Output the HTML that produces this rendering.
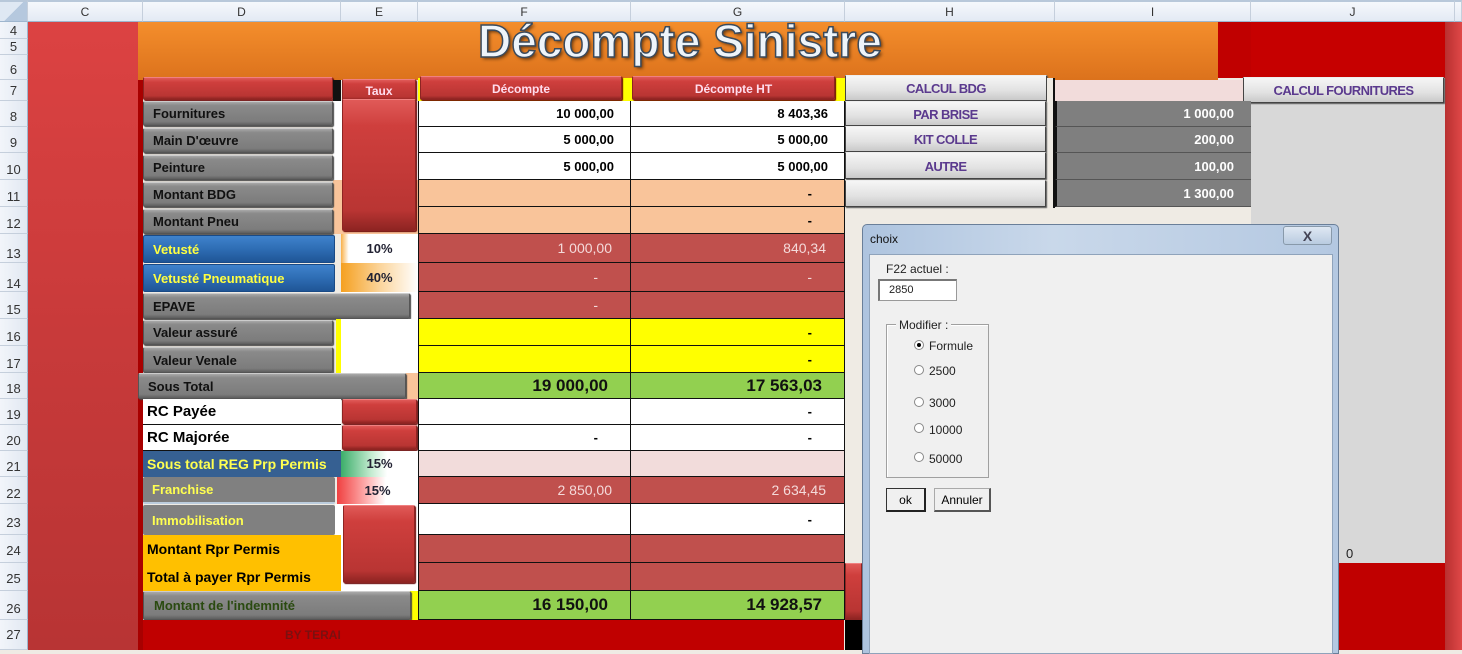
<!DOCTYPE html>
<html><head><meta charset="utf-8"><style>
*{margin:0;padding:0;box-sizing:border-box}
body{width:1462px;height:650px;overflow:hidden;background:#efebe4;font-family:"Liberation Sans",sans-serif;position:relative}
div{position:absolute}
.ch{top:0;height:22px;background:linear-gradient(#f5f8fc,#e3eaf4);border-right:1px solid #c5cfdc;border-bottom:1px solid #9eb6ce;border-top:2px solid #b8c8da;font-size:12px;color:#333;text-align:center;line-height:20px}
.rh{left:0;width:28px;background:linear-gradient(90deg,#f2f5fa,#e1e8f2);border-bottom:1px solid #c5cfdc;border-right:1px solid #9eb6ce;font-size:13px;color:#333;text-align:center}
.gb{background:linear-gradient(#a9a9a9,#8a8a8a 15%,#7c7c7c 85%,#5e5e5e);border:1px solid #555;border-top-color:#ccc;border-radius:2px;font-weight:bold;font-size:13px;color:#111;padding-left:9px;display:flex;align-items:center;box-shadow:1px 1px 1px #444}
.rb{background:linear-gradient(#e05a58,#cf3f3d 20%,#b93533 85%,#8e2422);border:1px solid #8e2422;border-top-color:#f08080;border-radius:2px;color:#fde;font-weight:bold;font-size:12px;text-align:center;box-shadow:1px 1px 1px #600}
.bb{background:linear-gradient(#3f82cc,#2e6db4 50%,#1f5596);border:1px solid #1a4a85;border-radius:2px;color:#ffff40;font-weight:bold;font-size:13px;padding-left:9px;display:flex;align-items:center}
.c{border-right:1px solid #111;border-bottom:1px solid #111;font-size:13px;text-align:right;padding-right:16px;display:flex;align-items:center;justify-content:flex-end}
.w{background:#fff;font-weight:bold;color:#000}
.p{background:#f9c49a;font-weight:bold}
.r{background:#c0504d;color:#f4dada;font-size:14px}
.y{background:#ffff00;font-weight:bold}
.g{background:#92d050;font-weight:bold;font-size:17px;color:#111}
.pk{background:#f2dcdb}
.hb{background:linear-gradient(#f6f6f6,#e2e2e2 60%,#c9c9c9);border:1px solid #444;border-top-color:#eee;color:#5b3a8e;font-weight:bold;font-size:13px;text-align:center;letter-spacing:-.6px;box-shadow:1px 1px 1px #555}
.iv{background:#7f7f7f;color:#fff;font-weight:bold;font-size:13px;text-align:right;padding-right:17px;border-bottom:1px solid #555;border-left:2px solid #111}
.dl{font-weight:bold;font-size:15px;color:#000;padding-left:4px;display:flex;align-items:center}
.rad{width:10px;height:10px;border-radius:50%;border:1px solid #888;background:#fff}
.rl{font-size:12px;color:#222}
</style></head><body>
<!-- column headers -->
<div class="ch" style="left:0;width:28px;background:linear-gradient(135deg,#dfe8f3 50%,#b5c8de 50%)"></div>
<div class="ch" style="left:28px;width:115px">C</div>
<div class="ch" style="left:143px;width:198px">D</div>
<div class="ch" style="left:341px;width:77px">E</div>
<div class="ch" style="left:418px;width:213px">F</div>
<div class="ch" style="left:631px;width:214px">G</div>
<div class="ch" style="left:845px;width:210px">H</div>
<div class="ch" style="left:1055px;width:196px">I</div>
<div class="ch" style="left:1251px;width:204px">J</div>
<div class="ch" style="left:1455px;width:7px"></div>
<!-- row headers -->
<div class="rh" style="top:22px;height:17px;line-height:17px">4</div>
<div class="rh" style="top:39px;height:16px;line-height:16px">5</div>
<div class="rh" style="top:55px;height:25px;line-height:30px">6</div>
<div class="rh" style="top:80px;height:21px;line-height:21px">7</div>
<div class="rh" style="top:101px;height:26px;line-height:32px">8</div>
<div class="rh" style="top:127px;height:26px;line-height:32px">9</div>
<div class="rh" style="top:153px;height:27px;line-height:34px">10</div>
<div class="rh" style="top:180px;height:27px;line-height:34px">11</div>
<div class="rh" style="top:207px;height:27px;line-height:34px">12</div>
<div class="rh" style="top:234px;height:29px;line-height:40px">13</div>
<div class="rh" style="top:263px;height:29px;line-height:42px">14</div>
<div class="rh" style="top:292px;height:27px;line-height:36px">15</div>
<div class="rh" style="top:319px;height:27px;line-height:36px">16</div>
<div class="rh" style="top:346px;height:27px;line-height:36px">17</div>
<div class="rh" style="top:373px;height:26px;line-height:32px">18</div>
<div class="rh" style="top:399px;height:26px;line-height:32px">19</div>
<div class="rh" style="top:425px;height:26px;line-height:32px">20</div>
<div class="rh" style="top:451px;height:26px;line-height:32px">21</div>
<div class="rh" style="top:477px;height:27px;line-height:34px">22</div>
<div class="rh" style="top:504px;height:31px;line-height:38px">23</div>
<div class="rh" style="top:535px;height:28px;line-height:32px">24</div>
<div class="rh" style="top:563px;height:28px;line-height:32px">25</div>
<div class="rh" style="top:591px;height:29px;line-height:36px">26</div>
<div class="rh" style="top:620px;height:30px;line-height:30px">27</div>
<!-- C column & edges -->
<div style="left:28px;top:22px;width:110px;height:628px;background:linear-gradient(#dc4242,#c83a3a 50%,#b83434)"></div>
<div style="left:138px;top:80px;width:5px;height:570px;background:#a80000"></div>
<div style="left:1445px;top:22px;width:17px;height:628px;background:linear-gradient(90deg,#b83030,#e04848)"></div>
<!-- title -->
<div style="left:138px;top:22px;width:1080px;height:58px;background:linear-gradient(#f48e2c,#dc721c)"></div>
<div style="left:1218px;top:22px;width:33px;height:56px;background:#c00000"></div>
<div style="left:1251px;top:22px;width:194px;height:56px;background:#c60000"></div>
<div style="left:400px;top:14px;width:560px;text-align:center;font-size:46px;font-weight:bold;color:#eef4fa;-webkit-text-stroke:1.5px #3a4a5c;text-shadow:2px 2px 3px #6a3a10;letter-spacing:0">Décompte Sinistre</div>
<!-- row 7 -->
<div class="rb" style="left:143px;top:77px;width:190px;height:23px"></div>
<div style="left:333px;top:80px;width:8px;height:21px;background:#111"></div>
<div class="rb" style="left:342px;top:79px;width:74px;height:22px;line-height:22px">Taux</div>
<div style="left:418px;top:78px;width:427px;height:23px;background:#ffff00"></div>
<div class="rb" style="left:420px;top:76px;width:202px;height:24px;line-height:24px">Décompte</div>
<div class="rb" style="left:632px;top:76px;width:203px;height:24px;line-height:24px">Décompte HT</div>
<div class="hb" style="left:845px;top:75px;width:202px;height:26px;line-height:26px">CALCUL BDG</div>
<div style="left:1047px;top:78px;width:8px;height:130px;background:#efebe4;border-right:2px solid #111"></div>
<div class="pk" style="left:1055px;top:80px;width:190px;height:21px"></div>
<div style="left:1251px;top:101px;width:194px;height:462px;background:#d8d8d8"></div>
<div class="hb" style="left:1243px;top:77px;width:201px;height:26px;line-height:26px">CALCUL FOURNITURES</div>
<!-- E columns backgrounds -->
<div style="left:333px;top:101px;width:85px;height:133px;background:#fff"></div>
<div style="left:333px;top:180px;width:85px;height:54px;background:#f9c49a"></div>
<div class="rb" style="left:342px;top:99px;width:74px;height:132px"></div>
<!-- rows 8-12 -->
<div class="gb" style="left:143px;top:101px;width:190px;height:25px">Fournitures</div>
<div class="gb" style="left:143px;top:128px;width:190px;height:25px">Main D'œuvre</div>
<div class="gb" style="left:143px;top:155px;width:190px;height:25px">Peinture</div>
<div class="gb" style="left:143px;top:182px;width:190px;height:25px">Montant BDG</div>
<div class="gb" style="left:143px;top:209px;width:190px;height:25px">Montant Pneu</div>
<div class="c w" style="left:418px;top:101px;width:213px;height:26px;border-left:1px solid #111">10 000,00</div>
<div class="c w" style="left:631px;top:101px;width:214px;height:26px">8 403,36</div>
<div class="c w" style="left:418px;top:127px;width:213px;height:26px;border-left:1px solid #111">5 000,00</div>
<div class="c w" style="left:631px;top:127px;width:214px;height:26px">5 000,00</div>
<div class="c w" style="left:418px;top:153px;width:213px;height:27px;border-left:1px solid #111">5 000,00</div>
<div class="c w" style="left:631px;top:153px;width:214px;height:27px">5 000,00</div>
<div class="c p" style="left:418px;top:180px;width:213px;height:27px;border-left:1px solid #111"></div>
<div class="c p" style="left:631px;top:180px;width:214px;height:27px;padding-right:32px">-</div>
<div class="c p" style="left:418px;top:207px;width:213px;height:27px;border-left:1px solid #111"></div>
<div class="c p" style="left:631px;top:207px;width:214px;height:27px;padding-right:32px">-</div>
<!-- H/I rows 8-11 -->
<div class="hb" style="left:845px;top:101px;width:201px;height:25px;line-height:25px">PAR BRISE</div>
<div class="hb" style="left:845px;top:126px;width:201px;height:26px;line-height:26px">KIT COLLE</div>
<div class="hb" style="left:845px;top:152px;width:201px;height:27px;line-height:27px">AUTRE</div>
<div class="hb" style="left:845px;top:180px;width:201px;height:27px"></div>
<div class="iv" style="left:1055px;top:101px;width:196px;height:26px;line-height:26px">1 000,00</div>
<div class="iv" style="left:1055px;top:127px;width:196px;height:26px;line-height:26px">200,00</div>
<div class="iv" style="left:1055px;top:153px;width:196px;height:27px;line-height:27px">100,00</div>
<div class="iv" style="left:1055px;top:180px;width:196px;height:27px;line-height:27px">1 300,00</div>
<!-- rows 13-15 -->
<div class="bb" style="left:143px;top:235px;width:192px;height:28px">Vetusté</div>
<div class="bb" style="left:143px;top:264px;width:192px;height:28px">Vetusté Pneumatique</div>
<div style="left:341px;top:234px;width:77px;height:29px;background:linear-gradient(90deg,#f9b048,#fff 10%);font-weight:bold;font-size:13px;color:#223;text-align:center;line-height:29px">10%</div>
<div style="left:341px;top:263px;width:77px;height:29px;background:linear-gradient(90deg,#f5a020,#fbd49a 50%,#fff);font-weight:bold;font-size:13px;color:#223;text-align:center;line-height:29px">40%</div>
<div style="left:341px;top:292px;width:77px;height:27px;background:#fff"></div>
<div class="c r" style="left:418px;top:234px;width:213px;height:29px;border-left:1px solid #111;padding-right:18px">1 000,00</div>
<div class="c r" style="left:631px;top:234px;width:214px;height:29px;padding-right:18px">840,34</div>
<div class="c r" style="left:418px;top:263px;width:213px;height:29px;border-left:1px solid #111;padding-right:32px">-</div>
<div class="c r" style="left:631px;top:263px;width:214px;height:29px;padding-right:32px">-</div>
<div class="c r" style="left:418px;top:292px;width:213px;height:27px;border-left:1px solid #111;padding-right:32px">-</div>
<div class="c r" style="left:631px;top:292px;width:214px;height:27px"></div>
<div class="gb" style="left:143px;top:293px;width:267px;height:26px">EPAVE</div>
<!-- rows 16-18 -->
<div style="left:336px;top:319px;width:5px;height:54px;background:#ffff00"></div>
<div style="left:341px;top:319px;width:77px;height:54px;background:#fff"></div>
<div class="gb" style="left:143px;top:320px;width:190px;height:25px">Valeur assuré</div>
<div class="gb" style="left:143px;top:347px;width:190px;height:26px">Valeur Venale</div>
<div class="c y" style="left:418px;top:319px;width:213px;height:27px;border-left:1px solid #111"></div>
<div class="c y" style="left:631px;top:319px;width:214px;height:27px;padding-right:32px">-</div>
<div class="c y" style="left:418px;top:346px;width:213px;height:27px;border-left:1px solid #111"></div>
<div class="c y" style="left:631px;top:346px;width:214px;height:27px;padding-right:32px">-</div>
<div style="left:406px;top:373px;width:12px;height:26px;background:#f9c49a"></div>
<div class="gb" style="left:138px;top:373px;width:268px;height:26px;padding-left:9px">Sous Total</div>
<div class="c g" style="left:418px;top:373px;width:213px;height:26px;border-left:1px solid #111;padding-right:22px">19 000,00</div>
<div class="c g" style="left:631px;top:373px;width:214px;height:26px;padding-right:22px">17 563,03</div>
<!-- rows 19-20 -->
<div class="dl" style="left:143px;top:399px;width:198px;height:26px;background:#fff;border-bottom:1px solid #111">RC Payée</div>
<div class="dl" style="left:143px;top:425px;width:198px;height:26px;background:#fff;border-bottom:1px solid #111">RC Majorée</div>
<div class="rb" style="left:342px;top:399px;width:75px;height:25px"></div>
<div class="rb" style="left:342px;top:425px;width:75px;height:25px"></div>
<div class="c w" style="left:418px;top:399px;width:213px;height:26px;border-left:1px solid #111"></div>
<div class="c w" style="left:631px;top:399px;width:214px;height:26px;padding-right:32px">-</div>
<div class="c w" style="left:418px;top:425px;width:213px;height:26px;border-left:1px solid #111;padding-right:32px">-</div>
<div class="c w" style="left:631px;top:425px;width:214px;height:26px;padding-right:32px">-</div>
<!-- row 21-22 -->
<div class="dl" style="left:143px;top:451px;width:198px;height:26px;background:#366092;color:#ffff50;font-size:14px">Sous total REG Prp Permis</div>
<div style="left:341px;top:451px;width:77px;height:26px;background:linear-gradient(90deg,#3cae6a,#c6ecd2 40%,#fff 60%);font-weight:bold;font-size:13px;color:#223;text-align:center;line-height:26px">15%</div>
<div class="c pk" style="left:418px;top:451px;width:213px;height:26px;border-left:1px solid #111"></div>
<div class="c pk" style="left:631px;top:451px;width:214px;height:26px"></div>
<div class="gb" style="left:143px;top:477px;width:192px;height:27px;color:#ffff50;padding-left:9px;border:none;box-shadow:none;background:#808080;border-bottom:2px solid #bcd">Franchise</div>
<div style="left:337px;top:477px;width:81px;height:27px;background:linear-gradient(90deg,#f04040,#fbb 40%,#fff 60%);font-weight:bold;font-size:13px;color:#223;text-align:center;line-height:27px">15%</div>
<div class="c r" style="left:418px;top:477px;width:213px;height:27px;border-left:1px solid #111;padding-right:18px">2 850,00</div>
<div class="c r" style="left:631px;top:477px;width:214px;height:27px;padding-right:18px">2 634,45</div>
<!-- row 23 -->
<div class="gb" style="left:143px;top:505px;width:192px;height:30px;color:#ffff50;border:none;box-shadow:none;background:#808080">Immobilisation</div>
<div style="left:335px;top:504px;width:83px;height:87px;background:#fff"></div>
<div class="rb" style="left:343px;top:505px;width:72px;height:78px"></div>
<div class="c w" style="left:418px;top:504px;width:213px;height:31px;border-left:1px solid #111"></div>
<div class="c w" style="left:631px;top:504px;width:214px;height:31px;padding-right:32px">-</div>
<!-- rows 24-25 -->
<div class="dl" style="left:143px;top:535px;width:198px;height:28px;background:#ffc000;font-size:14px">Montant Rpr Permis</div>
<div class="dl" style="left:143px;top:563px;width:198px;height:28px;background:#ffc000;font-size:14px">Total à payer Rpr Permis</div>
<div class="c r" style="left:418px;top:535px;width:213px;height:28px;border-left:1px solid #111"></div>
<div class="c r" style="left:631px;top:535px;width:214px;height:28px"></div>
<div class="c r" style="left:418px;top:563px;width:213px;height:28px;border-left:1px solid #111"></div>
<div class="c r" style="left:631px;top:563px;width:214px;height:28px"></div>
<!-- row 26 -->
<div style="left:341px;top:591px;width:77px;height:29px;background:#ffff00"></div>
<div class="gb" style="left:143px;top:591px;width:268px;height:29px;color:#2a4a10;padding-left:10px">Montant de l'indemnité</div>
<div class="c g" style="left:418px;top:591px;width:213px;height:29px;border-left:1px solid #111;padding-right:22px">16 150,00</div>
<div class="c g" style="left:631px;top:591px;width:214px;height:29px;padding-right:22px">14 928,57</div>
<!-- row 27 -->
<div style="left:143px;top:620px;width:701px;height:30px;background:#c00000;font-size:12px;font-weight:bold;color:#7a1010;padding-left:142px;line-height:30px">BY TERAI</div>
<!-- right below -->
<div class="rb" style="left:845px;top:563px;width:17px;height:57px;border-radius:0"></div>
<div style="left:845px;top:620px;width:17px;height:30px;background:#000"></div>
<div style="left:1251px;top:563px;width:194px;height:87px;background:#c00000"></div>
<div style="left:1346px;top:546px;font-size:13px;color:#222">0</div>
<!-- dialog -->
<div style="left:862px;top:224px;width:477px;height:430px;background:linear-gradient(90deg,#aec4df,#c9d8ea 40%,#b4c8e1);border:1px solid #6a7f99;border-radius:5px 5px 0 0"></div>
<div style="left:870px;top:232px;font-size:12px;color:#111">choix</div>
<div style="left:1283px;top:226px;width:49px;height:19px;border:1px solid #8899aa;border-radius:3px;background:linear-gradient(#dfe8f3,#b9cbe0);text-align:center;font-size:14px;font-weight:bold;color:#445;line-height:18px">X</div>
<div style="left:869px;top:254px;width:464px;height:400px;background:#f0f0f0;border:1px solid #8fa3bb"></div>
<div class="rl" style="left:886px;top:262px">F22 actuel :</div>
<div style="left:878px;top:279px;width:79px;height:22px;background:#fff;border:1px solid #999;border-top:2px solid #777;border-left:2px solid #777;font-size:11px;padding:3px 0 0 9px;color:#222">2850</div>
<div style="left:886px;top:324px;width:103px;height:154px;border:1px solid #a0a0a0;box-shadow:inset 1px 1px #fff"></div>
<div class="rl" style="left:896px;top:318px;background:#f0f0f0;padding:0 3px">Modifier :</div>
<div class="rad" style="left:914px;top:340px"><div style="left:2px;top:2px;width:4px;height:4px;border-radius:50%;background:#000"></div></div>
<div class="rl" style="left:929px;top:339px">Formule</div>
<div class="rad" style="left:914px;top:365px"></div><div class="rl" style="left:929px;top:364px">2500</div>
<div class="rad" style="left:914px;top:397px"></div><div class="rl" style="left:929px;top:396px">3000</div>
<div class="rad" style="left:914px;top:423px"></div><div class="rl" style="left:929px;top:423px">10000</div>
<div class="rad" style="left:914px;top:452px"></div><div class="rl" style="left:929px;top:452px">50000</div>
<div style="left:886px;top:488px;width:40px;height:24px;border:1px solid #333;border-bottom:2px solid #222;border-right:2px solid #222;background:#f0f0f0;text-align:center;font-size:12px;line-height:22px">ok</div>
<div style="left:934px;top:488px;width:57px;height:24px;border:1px solid #aaa;border-bottom:2px solid #555;border-right:2px solid #555;background:#f0f0f0;text-align:center;font-size:12px;line-height:22px">Annuler</div>
</body></html>
